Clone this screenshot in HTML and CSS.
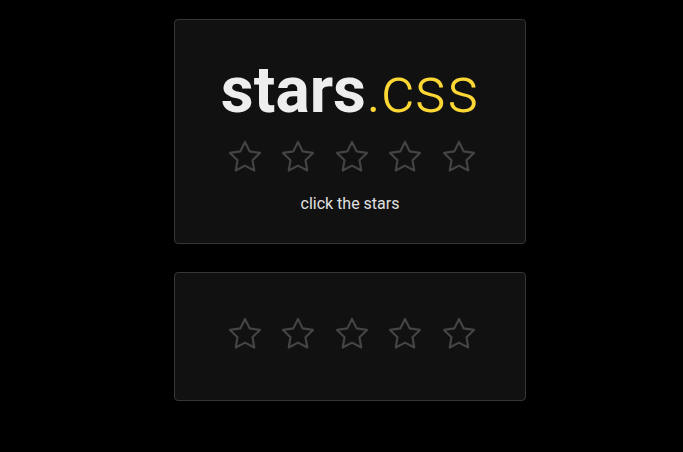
FILE: index.html
```html
<!DOCTYPE html>
<html>
<head>
<meta charset="utf-8">
<link rel="stylesheet" href="styles.css">
</head>
<body>
<div class="wrap">
  <div class="card card-main">
    <h1 class="title"><span class="bold">stars</span><span class="light">.css</span></h1>
    <div class="stars">
      <svg class="star" viewBox="0 0 24 24"><polygon points="12,2 15.09,8.26 22,9.27 17,14.14 18.18,21.02 12,17.77 5.82,21.02 7,14.14 2,9.27 8.91,8.26"/></svg>
      <svg class="star" viewBox="0 0 24 24"><polygon points="12,2 15.09,8.26 22,9.27 17,14.14 18.18,21.02 12,17.77 5.82,21.02 7,14.14 2,9.27 8.91,8.26"/></svg>
      <svg class="star" viewBox="0 0 24 24"><polygon points="12,2 15.09,8.26 22,9.27 17,14.14 18.18,21.02 12,17.77 5.82,21.02 7,14.14 2,9.27 8.91,8.26"/></svg>
      <svg class="star" viewBox="0 0 24 24"><polygon points="12,2 15.09,8.26 22,9.27 17,14.14 18.18,21.02 12,17.77 5.82,21.02 7,14.14 2,9.27 8.91,8.26"/></svg>
      <svg class="star" viewBox="0 0 24 24"><polygon points="12,2 15.09,8.26 22,9.27 17,14.14 18.18,21.02 12,17.77 5.82,21.02 7,14.14 2,9.27 8.91,8.26"/></svg>
    </div>
    <p class="hint">click the stars</p>
  </div>
  <div class="card card-second">
    <div class="stars">
      <svg class="star" viewBox="0 0 24 24"><polygon points="12,2 15.09,8.26 22,9.27 17,14.14 18.18,21.02 12,17.77 5.82,21.02 7,14.14 2,9.27 8.91,8.26"/></svg>
      <svg class="star" viewBox="0 0 24 24"><polygon points="12,2 15.09,8.26 22,9.27 17,14.14 18.18,21.02 12,17.77 5.82,21.02 7,14.14 2,9.27 8.91,8.26"/></svg>
      <svg class="star" viewBox="0 0 24 24"><polygon points="12,2 15.09,8.26 22,9.27 17,14.14 18.18,21.02 12,17.77 5.82,21.02 7,14.14 2,9.27 8.91,8.26"/></svg>
      <svg class="star" viewBox="0 0 24 24"><polygon points="12,2 15.09,8.26 22,9.27 17,14.14 18.18,21.02 12,17.77 5.82,21.02 7,14.14 2,9.27 8.91,8.26"/></svg>
      <svg class="star" viewBox="0 0 24 24"><polygon points="12,2 15.09,8.26 22,9.27 17,14.14 18.18,21.02 12,17.77 5.82,21.02 7,14.14 2,9.27 8.91,8.26"/></svg>
    </div>
  </div>
</div>
</body>
</html>
```

FILE: styles.css
```css
html, body {
  margin: 0;
  padding: 0;
  background: #000;
  font-family: Roboto, "Liberation Sans", sans-serif;
}

.wrap {
  width: 352px;
  margin: 19px 0 0 174px;
  display: flex;
  flex-direction: column;
  gap: 28px;
}

.card {
  box-sizing: border-box;
  background: #111;
  border: 1px solid #363636;
  border-radius: 4px;
  display: flex;
  flex-direction: column;
  align-items: center;
}

.card-main {
  height: 225px;
  padding-top: 39px;
}

.card-second {
  height: 129px;
  padding-top: 43px;
}

.title {
  margin: 0;
  font-size: 64px;
  line-height: 64px;
  font-weight: normal;
  white-space: nowrap;
}

.title .bold {
  font-weight: 700;
  color: #eeeeee;
}

.title .light {
  font-weight: 300;
  color: #fdd835;
}

.stars {
  display: flex;
  gap: 17.5px;
  padding-left: 3px;
}

.card-main .stars {
  margin-top: 16px;
}

.star {
  width: 36px;
  height: 36px;
  display: block;
}

.star polygon {
  fill: none;
  stroke: #444;
  stroke-width: 1.45;
  stroke-linejoin: round;
}

.hint {
  margin: 19px 0 0;
  font-size: 16px;
  line-height: 19px;
  color: #e0e0e0;
}
```
